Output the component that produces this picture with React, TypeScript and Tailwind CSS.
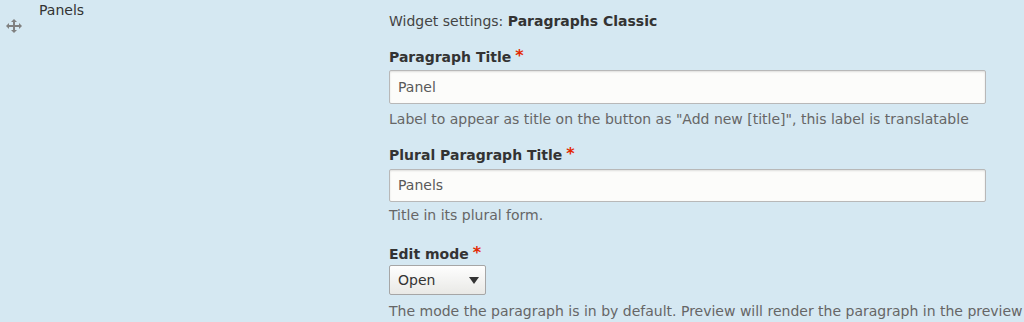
import React from "react";

function DragIcon() {
  return (
    <svg width="16" height="14" viewBox="0 0 16 14" className="block">
      <g fill="#808080">
        <rect x="7" y="2" width="2" height="10" />
        <rect x="2" y="6" width="12" height="2" />
        <path d="M8 0 L11 3 L5 3 Z" />
        <path d="M8 14 L11 11 L5 11 Z" />
        <path d="M0 7 L3 4 L3 10 Z" />
        <path d="M16 7 L13 4 L13 10 Z" />
      </g>
    </svg>
  );
}

function Star() {
  return <span className="text-[#e32700] font-bold ml-[4px] text-[16px] leading-none">*</span>;
}

export default function App() {
  return (
    <div
      className="w-[1024px] h-[322px] overflow-hidden bg-[#d5e8f2] flex text-[14px]"
      style={{ fontFamily: '"DejaVu Sans", "Noto Sans", sans-serif' }}
    >
      <div className="w-[389px] shrink-0 flex pl-[6px]">
        <div className="pt-[19px]">
          <DragIcon />
        </div>
        <div className="pl-[17px] text-[#333] leading-[18px] pt-[1px]">Panels</div>
      </div>
      <div className="flex-1 pt-[11px] text-[#333]">
        <div className="leading-[20px]">
          <span className="text-[#444]">Widget settings: </span>
          <span className="font-semibold">Paragraphs Classic</span>
        </div>

        <div className="mt-[17px] font-bold leading-[18px] flex items-start">
          Paragraph Title<Star />
        </div>
        <div className="mt-[4px] w-[597px] h-[34px] bg-[#fcfcfa] border border-[#b8b8b8] rounded-[2px] shadow-[inset_0_1px_2px_rgba(0,0,0,0.12)] flex items-center px-[8px] text-[#595959]">
          Panel
        </div>
        <div className="mt-[6px] text-[#666] leading-[18px]">
          Label to appear as title on the button as "Add new [title]", this label is translatable
        </div>

        <div className="mt-[18px] font-bold leading-[18px] flex items-start">
          Plural Paragraph Title<Star />
        </div>
        <div className="mt-[5px] w-[597px] h-[33px] bg-[#fcfcfa] border border-[#b8b8b8] rounded-[2px] shadow-[inset_0_1px_2px_rgba(0,0,0,0.12)] flex items-center px-[8px] text-[#595959]">
          Panels
        </div>
        <div className="mt-[4px] text-[#666] leading-[18px]">Title in its plural form.</div>

        <div className="mt-[21px] font-bold leading-[18px] flex items-start">
          Edit mode<Star />
        </div>
        <div className="mt-[2px] w-[97px] h-[30px] bg-gradient-to-b from-[#fefefe] to-[#e9e9e6] border border-[#a6a6a6] rounded-[2px] flex items-center justify-between pl-[8px] pr-[6px] text-[#333]">
          <span>Open</span>
          <svg width="10" height="7" viewBox="0 0 10 7"><path d="M0 0 L10 0 L5 7 Z" fill="#333" /></svg>
        </div>
        <div className="mt-[7px] text-[#666] leading-[18px] whitespace-nowrap">
          The mode the paragraph is in by default. Preview will render the paragraph in the preview
        </div>
      </div>
    </div>
  );
}
